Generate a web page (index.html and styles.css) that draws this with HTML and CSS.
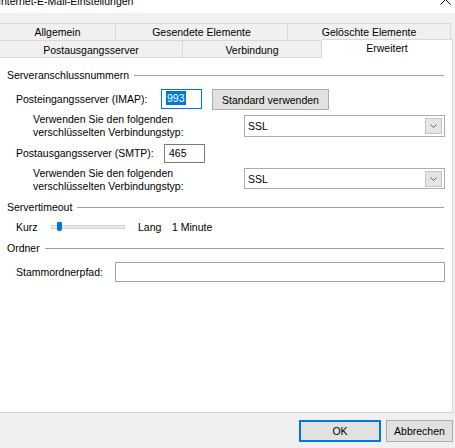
FILE: index.html
```html
<!DOCTYPE html>
<html lang="de">
<head>
    <meta charset="UTF-8">
    <meta name="viewport" content="width=device-width, initial-scale=1.0">
    <title>Internet-E-Mail-Einstellungen</title>
    <link rel="stylesheet" href="styles.css">
</head>
<body>
    <div class="window">
        <div class="titlebar">
            <span class="title">Internet-E-Mail-Einstellungen</span>
            <svg class="close" width="11" height="11" viewBox="0 0 11 11">
                <path d="M0.5 0.5 L10.5 10.5 M10.5 0.5 L0.5 10.5" stroke="#000" stroke-width="1" fill="none"/>
            </svg>
        </div>

        <div class="tabs">
            <div class="tab-row">
                <div class="tab tab-allgemein">Allgemein</div>
                <div class="tab tab-gesendet">Gesendete Elemente</div>
                <div class="tab tab-geloescht">Gelöschte Elemente</div>
            </div>
            <div class="tab-row">
                <div class="tab tab-postausgang">Postausgangsserver</div>
                <div class="tab tab-verbindung">Verbindung</div>
                <div class="tab tab-active">Erweitert</div>
            </div>
        </div>

        <div class="panel">
            <div class="group first"><span>Serveranschlussnummern</span></div>

            <div class="row row-imap">
                <label class="label label-imap" for="imap">Posteingangsserver (IMAP):</label>
                <div class="input input-port focused" id="imap"><span class="selection">993</span></div>
                <button class="btn btn-standard">Standard verwenden</button>
            </div>

            <div class="row row-enc">
                <div class="hint">Verwenden Sie den folgenden<br>verschlüsselten Verbindungstyp:</div>
                <div class="select enc-imap">
                    <span>SSL</span>
                    <span class="drop">
                        <svg width="7" height="4" viewBox="0 0 7 4"><path d="M0.5 0.5 L3.5 3.5 L6.5 0.5" stroke="#606060" fill="none"/></svg>
                    </span>
                </div>
            </div>

            <div class="row row-smtp">
                <label class="label label-smtp" for="smtp">Postausgangsserver (SMTP):</label>
                <div class="input input-port" id="smtp">465</div>
            </div>

            <div class="row row-enc row-enc-smtp">
                <div class="hint">Verwenden Sie den folgenden<br>verschlüsselten Verbindungstyp:</div>
                <div class="select enc-smtp">
                    <span>SSL</span>
                    <span class="drop">
                        <svg width="7" height="4" viewBox="0 0 7 4"><path d="M0.5 0.5 L3.5 3.5 L6.5 0.5" stroke="#606060" fill="none"/></svg>
                    </span>
                </div>
            </div>

            <div class="group"><span>Servertimeout</span></div>

            <div class="row row-timeout">
                <span class="label label-kurz">Kurz</span>
                <div class="slider"><div class="thumb"></div></div>
                <span class="label label-lang">Lang</span>
                <span>1 Minute</span>
            </div>

            <div class="group"><span>Ordner</span></div>

            <div class="row row-folder">
                <label class="label label-folder" for="folder">Stammordnerpfad:</label>
                <div class="input input-folder" id="folder"></div>
            </div>
        </div>

        <div class="footer">
            <button class="btn btn-ok">OK</button>
            <button class="btn btn-cancel">Abbrechen</button>
        </div>
    </div>
</body>
</html>
```

FILE: styles.css
```css
body {
    margin: 0;
    font-family: "Liberation Sans", Arial, sans-serif;
    font-size: 10.5px;
    color: #000;
}
.window {
    width: 455px;
    height: 448px;
    background: #f0f0f0;
    display: flex;
    flex-direction: column;
    overflow: hidden;
}

/* title bar, scrolled partly out of view */
.titlebar {
    height: 13px;
    flex: none;
    background: #fff;
    display: flex;
    justify-content: space-between;
    align-items: flex-start;
    overflow: hidden;
}
.title {
    margin-top: -6px;
    margin-left: -2px;
    font-size: 10.5px;
    line-height: 14px;
}
.close {
    margin-top: -6px;
    margin-right: 4px;
}

/* tab strip */
.tabs {
    margin-top: 10px;
    margin-left: -1px;
    flex: none;
}
.tab-row {
    display: flex;
    height: 17px;
}
.tab {
    box-sizing: border-box;
    height: 17px;
    border-top: 1px solid #d9d9d9;
    border-right: 1px solid #d9d9d9;
    text-align: center;
    line-height: 16px;
}
.tab-row .tab:first-child {
    border-left: 1px solid #d9d9d9;
}
.tab-allgemein { width: 117px; }
.tab-gesendet { width: 172px; }
.tab-geloescht { width: 163px; }
.tab-postausgang { width: 184px; line-height: 18px; }
.tab-verbindung { width: 139px; line-height: 18px; }
.tab-active {
    position: relative;
    z-index: 1;
    width: 131px;
    height: 19px;
    margin-top: -1px;
    background: #fff;
    line-height: 16px;
}

/* white page of the active tab */
.panel {
    flex: 1;
    width: 453px;
    box-sizing: border-box;
    background: #fff;
    border-top: 1px solid #d9d9d9;
    border-right: 1px solid #d9d9d9;
    border-bottom: 1px solid #d4d4d4;
    padding: 0 7px 0 7px;
}
.group {
    display: flex;
    align-items: center;
    line-height: 14px;
    margin-top: 7px;
}
.group.first {
    margin-top: 10px;
}
.group::after {
    content: "";
    flex: 1;
    border-top: 1px solid #a0a0a0;
    margin-left: 5px;
    margin-right: 1px;
}
.row {
    display: flex;
    align-items: flex-start;
}
.label {
    padding-left: 9px;
    box-sizing: border-box;
    flex: none;
}
.input {
    box-sizing: border-box;
    border: 1px solid #7a7a7a;
    background: #fff;
    padding-left: 4px;
}
.input-port {
    width: 41px;
}

.row-imap {
    margin-top: 7px;
}
.label-imap {
    width: 154px;
    line-height: 20px;
}
.row-imap .input {
    height: 20px;
    line-height: 17px;
}
.focused {
    border-color: #0078d7;
}
.selection {
    background: #0078d7;
    color: #fff;
    padding: 1px 1px;
}
.btn {
    font-family: inherit;
    font-size: inherit;
    color: #000;
    background: #e1e1e1;
    border: 1px solid #adadad;
    box-sizing: border-box;
    padding: 0;
    height: 21px;
}
.btn-standard {
    width: 117px;
    margin-left: 10px;
}

.row-enc {
    margin-top: 3px;
}
.row-enc-smtp {
    margin-top: 4px;
}
.hint {
    padding-left: 26px;
    line-height: 13px;
}
.select {
    margin-left: auto;
    margin-top: 2px;
    width: 201px;
    height: 22px;
    box-sizing: border-box;
    border: 1px solid #acacac;
    background: #fff;
    display: flex;
    align-items: center;
    justify-content: space-between;
    padding: 0 2px 0 3px;
}
.enc-smtp {
    margin-top: 1px;
    height: 21px;
}
.drop {
    width: 17px;
    height: 16px;
    box-sizing: border-box;
    background: #e5e5e5;
    border: 1px solid #c4c4c4;
    display: flex;
    align-items: center;
    justify-content: center;
}

.row-smtp {
    margin-top: 5px;
}
.label-smtp {
    width: 157px;
    line-height: 19px;
}
.row-smtp .input {
    height: 19px;
    line-height: 17px;
}

/* trackbar */
.row-timeout {
    margin-top: 6px;
    line-height: 14px;
    align-items: center;
}
.label-kurz {
    width: 44px;
}
.slider {
    position: relative;
    width: 74px;
    height: 4px;
    box-sizing: border-box;
    background: #e7eaea;
    border: 1px solid #d6d6d6;
}
.thumb {
    position: absolute;
    left: 5px;
    top: -4px;
    width: 5px;
    height: 9px;
    background: #0078d7;
    border-radius: 1px 1px 2px 2px;
}
.label-lang {
    margin-left: 4px;
    width: 43px;
}

.row-folder {
    margin-top: 7px;
}
.label-folder {
    width: 108px;
    line-height: 20px;
}
.input-folder {
    flex: 1;
    height: 20px;
    border-color: #a0a0a0;
}

/* dialog buttons */
.footer {
    height: 35px;
    flex: none;
    display: flex;
    justify-content: flex-end;
    align-items: flex-start;
    gap: 5px;
    padding-top: 7px;
    padding-right: 2px;
    box-sizing: border-box;
}
.btn-ok {
    width: 82px;
    height: 22px;
    border-color: #0078d7;
    box-shadow: inset 0 0 0 1px #0078d7;
}
.btn-cancel {
    width: 67px;
    height: 22px;
}
```
